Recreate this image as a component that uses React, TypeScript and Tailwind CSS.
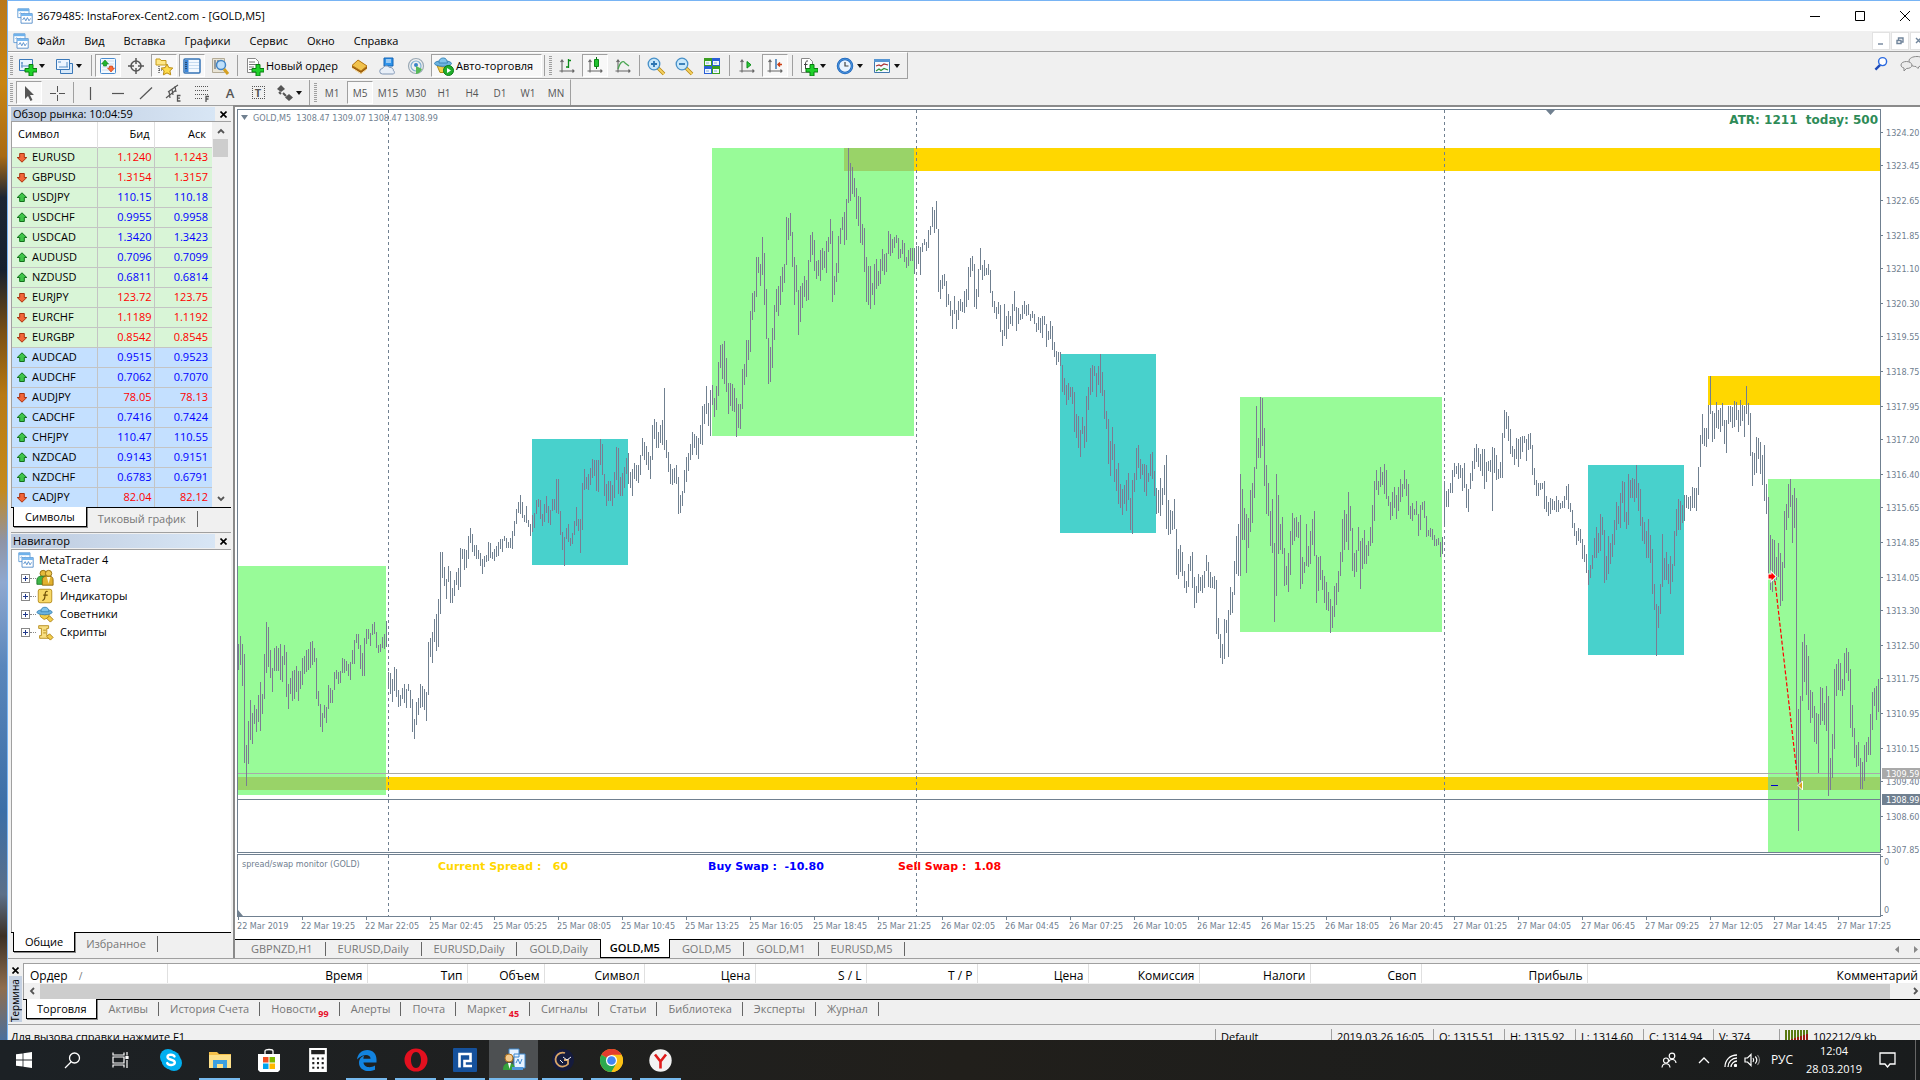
import type { ReactNode } from 'react';
import { clsx } from 'clsx';

// High and low of each M5 bar, two pixels apart on the canvas
const BARS = `
644-670 636-665 644-686 654-763 745-786 721-764 700-740 713-744 705-724 709-732 695-722 682-731 694-714 654-699
622-673 627-667 650-678 668-692 648-671 646-671 648-671 644-680 656-682 645-665 652-697 684-709 678-694 671-701
670-699 666-692 671-701 671-689 658-685 656-674 650-672 649-670 642-668 641-665 648-662 658-699 691-706 704-727
713-732 705-718 707-723 685-709 688-703 690-703 672-690 670-679 672-684 671-683 658-673 659-673 661-671 664-676
662-680 650-664 640-664 634-643 634-649 645-669 653-676 638-676 629-644 629-639 633-646 624-635 622-634 632-648
645-653 644-652 637-648 634-649 621-647 672-688 673-694 679-702 667-691 669-697 690-707 695-706 688-699 684-703
689-708 684-691 690-708 699-732 719-739 702-725 698-715 684-708 686-707 689-710 692-721 642-695 638-657 632-663
619-642 614-651 599-647 552-614 552-578 567-586 579-599 566-582 571-603 588-603 580-596 572-585 568-590 548-587
549-559 549-570 550-568 536-559 528-543 534-552 545-556 545-559 550-559 553-566 559-574 556-567 555-562 542-561
543-558 552-559 549-561 546-557 542-556 539-549 539-552 536-541 538-548 542-548 538-548 531-549 521-536 509-524
502-513 495-514 502-518 515-522 506-523 520-527 524-536 515-532 513-528 500-514 499-507 500-519 514-526 504-522
496-513 506-523 510-525 499-511 499-510 479-513 479-514 511-535 532-550 537-566 528-539 524-542 538-546 533-544
521-535 507-526 519-531 519-553 483-530 469-490 477-489 474-490 468-485 459-478 460-476 460-491 460-492 439-465
444-475 474-496 484-506 481-501 481-501 485-506 472-498 447-480 448-494 477-496 473-496 467-488 458-474 453-484
472-488 469-496 463-479 465-481 465-483 455-475 438-456 442-460 446-465 452-470 456-479 425-460 419-439 422-448
432-448 425-443 420-445 388-450 440-458 452-472 464-484 469-485 468-483 465-484 477-514 495-513 491-506 470-493
457-482 453-471 444-460 432-455 434-448 436-455 438-459 425-444 406-445 404-424 386-414 403-426 390-436 385-405
398-417 386-410 362-396 345-368 344-379 341-384 358-392 383-414 383-406 384-411 388-412 398-437 404-428 404-429
369-409 364-385 340-377 340-360 311-352 293-320 291-312 257-297 257-273 264-286 237-275 253-305 289-339 338-384
347-382 328-368 305-340 289-312 286-316 276-305 267-292 264-283 217-265 218-240 213-236 232-267 257-305 265-292
290-335 286-322 283-308 276-297 280-301 260-300 235-262 232-255 240-271 261-279 260-276 250-281 248-270 251-268
241-273 237-252 219-244 231-302 276-295 263-282 236-273 228-244 217-230 212-245 199-240 148-203 163-201 167-194
178-197 188-219 196-226 197-243 224-245 228-272 257-302 266-305 266-309 283-295 264-305 259-289 271-286 259-284
249-271 254-275 253-272 231-254 234-256 239-253 237-248 235-243 238-259 249-258 240-254 243-262 257-268 250-266
248-261 248-261 248-274 246-268 246-264 247-275 243-252 239-245 242-251 230-248 226-235 207-227 210-233 201-229
229-292 280-299 275-289 274-286 281-307 294-305 301-316 310-329 296-314 310-329 301-320 299-311 302-312 291-313
289-307 267-300 258-277 256-271 264-307 289-309 269-297 248-270 265-280 260-276 268-275 264-275 270-293 291-307
301-313 307-319 302-314 305-332 330-346 304-336 316-339 311-329 316-324 304-326 291-311 307-331 308-324 314-320
305-319 301-314 305-316 304-315 314-321 311-318 314-324 323-332 317-330 318-333 316-338 316-325 324-347 331-340
321-339 326-350 342-357 351-365 352-362 352-366 365-392 378-395 385-405 383-400 387-397 387-404 392-432 414-438
416-448 430-457 417-434 426-448 396-442 387-410 368-395 365-392 366-376 373-397 366-385 354-393 372-396 390-419
411-429 419-464 441-476 427-460 444-482 469-491 463-504 484-508 489-515 485-504 480-511 473-500 498-530 480-534
473-492 448-480 445-468 459-479 464-475 464-492 465-496 473-482 454-476 452-479 471-496 488-514 490-513 478-516
488-505 465-495 455-529 500-535 510-534 511-530 499-529 529-575 549-579 545-572 552-576 571-588 581-593 564-587
556-571 552-588 577-608 586-603 574-593 577-591 575-593 571-588 555-571 562-587 572-588 577-588 576-589 580-634
618-639 634-658 644-664 619-659 620-633 610-657 587-615 592-613 561-595 536-574 524-576 474-576 489-540 508-540
514-573 518-548 490-532 483-523 467-498 406-469 438-458 397-458 398-446 428-486 465-514 483-516 511-546 499-553
543-622 474-596 495-554 524-550 517-554 548-586 566-585 553-592 531-575 513-545 518-541 517-537 522-538 515-589
557-584 562-573 524-566 546-567 531-564 519-545 511-556 555-603 557-591 556-580 570-590 576-603 582-610 592-611
599-633 606-628 586-617 583-605 571-592 552-576 519-562 510-550 514-542 492-550 506-531 528-571 553-577 550-572
527-551 541-589 538-569 530-564 545-564 541-556 527-546 505-543 481-521 470-490 481-495 467-487 472-485 464-494
470-499 496-506 502-520 492-516 487-508 495-519 487-511 479-502 484-497 470-489 479-496 484-515 506-519 503-521
509-515 501-515 514-536 505-530 502-510 501-518 516-537 530-536 528-537 529-540 535-546 539-546 538-545 542-557
537-554 481-526 491-507 489-507 483-493 470-493 463-477 466-474 463-479 465-478 468-491 463-488 484-508 489-512
473-489 461-481 448-469 444-462 448-467 454-471 449-476 449-489 462-482 461-471 460-472 447-511 448-473 455-480
469-479 462-478 433-478 410-438 412-429 416-441 429-454 446-457 449-465 438-459 439-467 437-459 436-452 436-443
439-461 434-450 433-449 445-475 468-485 480-496 483-496 483-490 483-489 481-509 496-512 502-516 498-514 499-510
501-510 496-512 500-512 503-509 501-508 496-508 486-500 484-509 503-512 510-528 523-536 531-545 528-541 529-543
539-559 545-562 554-573 570-585 565-578 555-569 538-558 527-558 533-553 514-551 517-535 530-583 556-580 536-574
543-564 534-557 520-545 502-530 506-524 493-528 481-503 482-522 512-529 474-525 480-498 478-498 479-502 465-498
483-511 489-526 517-541 522-544 531-558 519-558 535-563 549-594 584-610 604-656 606-628 584-614 534-587 558-580
552-580 564-584 556-594 564-582 531-566 509-536 499-530 501-530 505-523 495-521 495-508 497-509 496-511 487-508
488-508 488-511 467-495 435-467 414-444 428-446 428-447 405-439 376-414 411-442 413-439 402-428 410-429 408-432
403-426 420-444 420-453 406-424 406-422 407-428 401-427 402-420 410-432 400-426 405-421 406-437 386-414 403-425
413-456 452-486 453-475 437-473 438-459 442-474 455-485 445-501 484-514 497-574 535-590 539-592 540-582 557-580
543-577 553-606 562-601 511-568 504-530 484-518 479-507 495-543 488-528 498-770 709-831 696-785 642-701 634-682
645-695 656-710 690-723 692-718 706-742 713-744 714-773 687-725 688-721 703-725 686-731 696-796 758-790 734-778
669-749 664-696 659-690 663-691 679-696 653-690 648-673 652-681 669-728 705-737 728-758 745-767 742-766 758-789
762-789 745-781 742-762 737-755 714-755 692-730 688-706 686-720 679-712
`;

const BAR_PATH = BARS.trim()
    .split(/\s+/)
    .map((bar, i) => {
        const [high, low] = bar.split('-');
        return `M${238 + i * 2} ${high}h1V${low}h-1z`;
    })
    .join('');

const LEVELS = [
    { x: 238, y: 777, w: 1642, h: 13 },
    { x: 844, y: 148, w: 1036, h: 23 },
    { x: 1708, y: 376, w: 172, h: 29 },
];

const SESSIONS = [
    { x: 238, y: 566, w: 148, h: 229, fill: '#98fb98' },
    { x: 712, y: 148, w: 202, h: 288, fill: '#98fb98' },
    { x: 1240, y: 397, w: 202, h: 235, fill: '#98fb98' },
    { x: 1768, y: 479, w: 112, h: 373, fill: '#98fb98' },
    { x: 532, y: 439, w: 96, h: 126, fill: '#48d1cc' },
    { x: 1060, y: 354, w: 96, h: 179, fill: '#48d1cc' },
    { x: 1588, y: 465, w: 96, h: 190, fill: '#48d1cc' },
];

const OVERLAPS = [
    { x: 238, y: 777, w: 148, h: 13 },
    { x: 844, y: 148, w: 70, h: 23 },
    { x: 1768, y: 777, w: 112, h: 13 },
];

const PRICES: [string, number][] = [
    ['1324.20', 132], ['1323.45', 165], ['1322.65', 200], ['1321.85', 235], ['1321.10', 268], ['1320.30', 303],
    ['1319.55', 336], ['1318.75', 371], ['1317.95', 406], ['1317.20', 439], ['1316.40', 474], ['1315.65', 507],
    ['1314.85', 542], ['1314.05', 577], ['1313.30', 610], ['1312.50', 645], ['1311.75', 678], ['1310.95', 713],
    ['1310.15', 748], ['1309.40', 781], ['1308.60', 816], ['1307.85', 849],
];

const TIMES = [
    '22 Mar 2019', '22 Mar 19:25', '22 Mar 22:05', '25 Mar 02:45', '25 Mar 05:25', '25 Mar 08:05', '25 Mar 10:45',
    '25 Mar 13:25', '25 Mar 16:05', '25 Mar 18:45', '25 Mar 21:25', '26 Mar 02:05', '26 Mar 04:45', '26 Mar 07:25',
    '26 Mar 10:05', '26 Mar 12:45', '26 Mar 15:25', '26 Mar 18:05', '26 Mar 20:45', '27 Mar 01:25', '27 Mar 04:05',
    '27 Mar 06:45', '27 Mar 09:25', '27 Mar 12:05', '27 Mar 14:45', '27 Mar 17:25',
];

type Quote = { symbol: string; bid: string; ask: string; up: boolean; minor?: boolean };

const QUOTES: Quote[] = [
    { symbol: 'EURUSD', bid: '1.1240', ask: '1.1243', up: false },
    { symbol: 'GBPUSD', bid: '1.3154', ask: '1.3157', up: false },
    { symbol: 'USDJPY', bid: '110.15', ask: '110.18', up: true },
    { symbol: 'USDCHF', bid: '0.9955', ask: '0.9958', up: true },
    { symbol: 'USDCAD', bid: '1.3420', ask: '1.3423', up: true },
    { symbol: 'AUDUSD', bid: '0.7096', ask: '0.7099', up: true },
    { symbol: 'NZDUSD', bid: '0.6811', ask: '0.6814', up: true },
    { symbol: 'EURJPY', bid: '123.72', ask: '123.75', up: false },
    { symbol: 'EURCHF', bid: '1.1189', ask: '1.1192', up: false },
    { symbol: 'EURGBP', bid: '0.8542', ask: '0.8545', up: false },
    { symbol: 'AUDCAD', bid: '0.9515', ask: '0.9523', up: true, minor: true },
    { symbol: 'AUDCHF', bid: '0.7062', ask: '0.7070', up: true, minor: true },
    { symbol: 'AUDJPY', bid: '78.05', ask: '78.13', up: false, minor: true },
    { symbol: 'CADCHF', bid: '0.7416', ask: '0.7424', up: true, minor: true },
    { symbol: 'CHFJPY', bid: '110.47', ask: '110.55', up: true, minor: true },
    { symbol: 'NZDCAD', bid: '0.9143', ask: '0.9151', up: true, minor: true },
    { symbol: 'NZDCHF', bid: '0.6783', ask: '0.6791', up: true, minor: true },
    { symbol: 'CADJPY', bid: '82.04', ask: '82.12', up: false, minor: true },
];

const ORDER_COLUMNS = [
    { label: 'Время', width: 200 },
    { label: 'Тип', width: 100 },
    { label: 'Объем', width: 77 },
    { label: 'Символ', width: 100 },
    { label: 'Цена', width: 111 },
    { label: 'S / L', width: 111 },
    { label: 'T / P', width: 111 },
    { label: 'Цена', width: 111 },
    { label: 'Комиссия', width: 111 },
    { label: 'Налоги', width: 111 },
    { label: 'Своп', width: 111 },
    { label: 'Прибыль', width: 166 },
];

const TERMINAL_TABS = [
    { label: 'Активы' }, { label: 'История Счета' }, { label: 'Новости', count: 99 }, { label: 'Алерты' },
    { label: 'Почта' }, { label: 'Маркет', count: 45 }, { label: 'Сигналы' }, { label: 'Статьи' },
    { label: 'Библиотека' }, { label: 'Эксперты' }, { label: 'Журнал' },
];

const CHART_TABS = ['GBPNZD,H1', 'EURUSD,Daily', 'EURUSD,Daily', 'GOLD,Daily', 'GOLD,M5', 'GOLD,M5', 'GOLD,M1', 'EURUSD,M5'];

/* ---------- icons ---------- */

function Icon({ children, size = 20 }: { children: ReactNode; size?: number }) {
    return (
        <svg width={size} height={size} viewBox="0 0 20 20" fill="none" className="shrink-0" aria-hidden="true">
            {children}
        </svg>
    );
}

const Plus = () => <path d="M12 8.500h4v4h4v3.500h-4V20h-4v-4H8v-3.500h4z" fill="#1fd12a" stroke="#0a7d12" />;

const AppIcon = ({ size = 16 }: { size?: number }) => (
    <Icon size={size}>
        <path d="M1 1h14v11H1z" fill="#fff" stroke="#4c8fd0" />
        <path d="M1 1h14v3H1z" fill="#6fb1ea" />
        <path d="M3 7l2-1 2 3 2-3" stroke="#5c9bd6" />
        <path d="M5 7h14v12H5z" fill="#fff" stroke="#3f7fc4" />
        <path d="M5 7h14v3H5z" fill="#79b8ef" />
        <path d="M7 15l2-3 2 4 2-4 2 4 2-3" stroke="#3f7fc4" />
    </Icon>
);

const NewChartIcon = () => (
    <Icon>
        <path d="M2.500 3.500h13v11h-13z" fill="#eaf4ff" stroke="#3b78b8" />
        <path d="M5 6v6M4 10h9M4 7h2" stroke="#5990c6" />
        <Plus />
    </Icon>
);

const ProfilesIcon = () => (
    <Icon>
        <path d="M6.500 7.500h12v10h-12z" fill="#d7e9fa" stroke="#3b78b8" />
        <path d="M2.500 3.500h13v10h-13z" fill="#eef6ff" stroke="#3b78b8" />
        <path d="M4 6h3M13 6v5M5 11h9" stroke="#5990c6" />
    </Icon>
);

const MarketIcon = () => (
    <Icon>
        <rect x="2.500" y="2.500" width="15" height="15" rx="1" fill="#f4faff" stroke="#4a8bce" />
        <path d="M4 5h12M4 8h12M4 11h12M4 14h12" stroke="#cfdcea" />
        <path d="M7 4l3.500 4H8.500v2h-3V8H3.500z" fill="#22b52c" stroke="#0d7c17" strokeWidth=".6" />
        <path d="M13 16l3.500-4H14.500v-2h-3v2H9.500z" fill="#ff6a33" stroke="#bb3610" strokeWidth=".6" />
    </Icon>
);

const CrossIcon = () => (
    <Icon>
        <circle cx="10" cy="10" r="5" stroke="#555" strokeWidth="1.500" />
        <path d="M10 2v6M10 12v6M2 10h6M12 10h6" stroke="#555" strokeWidth="1.500" />
    </Icon>
);

const star = 'M13 8l1.800 3.600 4 .5-2.900 2.700.8 4L13 16.900l-3.600 1.900.7-4-2.900-2.700 4-.5z';

const NavigatorIcon = () => (
    <Icon>
        <path d="M2 3h4l1 1.500h5V9H2z" fill="#ffe887" stroke="#c49a1c" />
        <path d="M5 10v8M5 14h4" stroke="#222" strokeDasharray="1 1" />
        <path d={star} fill="#ffdd4d" stroke="#b98a10" />
    </Icon>
);

const TerminalIcon = () => (
    <Icon>
        <rect x="2" y="3" width="16" height="14" rx="1" fill="#f3f9ff" stroke="#3573b5" strokeWidth="1.500" />
        <path d="M3 4h3.500v12H3z" fill="#3c86d8" />
        <path d="M7 6.500h10M7 9.500h10M7 12.500h10" stroke="#c7dcf0" />
        <path d="M4 6v8" stroke="#111" strokeDasharray="1 1" />
    </Icon>
);

const TesterIcon = () => (
    <Icon>
        <path d="M2.500 2.500h12v14h-12z" fill="#e9e4d5" stroke="#b3ab96" />
        <path d="M5 4v9M8 4v5" stroke="#456" />
        <circle cx="11" cy="9" r="4.500" fill="#bfe0fa" stroke="#4285c6" strokeWidth="1.500" />
        <path d="M14 13l4 5" stroke="#d5a021" strokeWidth="3" />
    </Icon>
);

const NewOrderIcon = () => (
    <Icon>
        <path d="M3.500 2.500h8l3 3v11h-11z" fill="#fff" stroke="#888" />
        <path d="M5 6h6M5 8.500h7M5 11h5M5 13.500h4" stroke="#777" />
        <Plus />
    </Icon>
);

const BookIcon = () => (
    <Icon>
        <path d="M8 4l9 6v3l-6 5-9-6V9.500z" fill="#9b5c0c" />
        <path d="M8 4l9 6-6 5-9-5.500z" fill="#f1c24c" stroke="#b77a17" />
        <path d="M2 12l9 5.500 6-4.500" stroke="#ffe9b0" />
    </Icon>
);

const VpsIcon = () => (
    <Icon>
        <path d="M6 2h9v8H6z" fill="#2f93ea" stroke="#1565b5" />
        <path d="M8 4h5M8 6h5" stroke="#fff" />
        <path d="M4.500 18a2.700 2.700 0 010-5.500 4 4 0 017-1 3.300 3.300 0 014 3.300 1.900 1.900 0 010 3.200z" fill="#e8eff8" stroke="#8096b4" />
    </Icon>
);

const SignalIcon = () => (
    <Icon>
        <circle cx="10" cy="10" r="7.500" stroke="#9aa9b5" strokeWidth="1.200" />
        <circle cx="10" cy="10" r="5" stroke="#7fb0d2" strokeWidth="1.200" />
        <circle cx="10" cy="9" r="2" fill="#3a83c9" />
        <path d="M10 10v8a8 8 0 006-5z" fill="#57b957" />
    </Icon>
);

const AdvisorIcon = () => (
    <Icon>
        <path d="M3 9.500l6 1.500 6-1.500-2 7H6z" fill="#f2cd49" stroke="#b58c17" />
        <ellipse cx="9" cy="7.500" rx="8.500" ry="2.800" fill="#6db4e0" stroke="#3b86b8" />
        <path d="M5 7C5 3 7 2 9.500 2S13 4 13.500 7z" fill="#81c4ec" stroke="#3b86b8" />
        <circle cx="14.500" cy="14.500" r="5" fill="#1fae2c" stroke="#0d7c17" />
        <path d="M13 12l4 2.500-4 2.500z" fill="#fff" />
    </Icon>
);

const Axes = () => <path d="M5 4v12.500M3.500 6L5 4l1.500 2M2.500 15H17M15.500 13.500L17 15l-1.500 1.500" stroke="#666" strokeWidth="1.100" />;

const BarChartIcon = () => (
    <Icon><Axes /><path d="M11.500 3v9M11.500 4.500h2.500M9 11h2.500" stroke="#0b8a18" strokeWidth="1.300" /></Icon>
);
const CandleIcon = () => (
    <Icon><Axes /><path d="M11.500 1v12" stroke="#0b6a14" /><path d="M9.500 3.500h4v7h-4z" fill="#22c12f" stroke="#0b8a18" /></Icon>
);
const LineChartIcon = () => (
    <Icon><Axes /><path d="M5 13c2-7 5-9 7-6l4 3" stroke="#4aa552" strokeWidth="1.300" /></Icon>
);
const ScrollIcon = () => (
    <Icon><Axes /><path d="M10 5.500l4 3.300-4 3.300z" fill="#2ccb38" stroke="#0b8a18" /></Icon>
);
const ShiftIcon = () => (
    <Icon><Axes /><path d="M11 3v10" stroke="#1f63a8" strokeWidth="1.300" /><path d="M17 8.500h-4M15 6.500l-2 2 2 2" stroke="#cc3e12" strokeWidth="1.500" /></Icon>
);

const ZoomIcon = ({ plus }: { plus?: boolean }) => (
    <Icon>
        <path d="M12 12l6 6" stroke="#b98913" strokeWidth="3.500" />
        <path d="M12 12l6 6" stroke="#f6d262" strokeWidth="1.800" />
        <circle cx="8" cy="8" r="5.800" fill="#c9e8fb" stroke="#4790c8" strokeWidth="1.300" />
        <path d={plus ? 'M5 8h6M8 5v6' : 'M5 8h6'} stroke="#2d76b3" strokeWidth="1.800" />
    </Icon>
);

const TileIcon = () => (
    <Icon>
        <path d="M2 2h8v8H2zM10 10h8v8h-8z" fill="#3b9e22" />
        <path d="M10 2h8v8h-8zM2 10h8v8H2z" fill="#2a5fd6" />
        <path d="M3 5h6v4H3zM11 5h6v4h-6zM3 13h6v4H3zM11 13h6v4h-6z" fill="#f2f8ff" />
        <path d="M4 7h3M12 7h3M4 15h3M12 15h3" stroke="#8aaed6" />
    </Icon>
);

const IndicatorAddIcon = () => (
    <Icon>
        <path d="M3.500 2.500h8l3 3v11h-11z" fill="#fff" stroke="#888" />
        <path d="M10 5c-2-.5-2.500 1-2.500 3v5M6 8.500h3.500" stroke="#444" />
        <Plus />
    </Icon>
);

const ClockIcon = () => (
    <Icon>
        <circle cx="10" cy="10" r="7" fill="#e9f4ff" stroke="#1b62b8" strokeWidth="2.500" />
        <circle cx="10" cy="10" r="7" stroke="#59a6ec" strokeWidth=".8" />
        <path d="M10 6V10h3.500" stroke="#444" strokeWidth="1.200" />
    </Icon>
);

const TemplateIcon = () => (
    <Icon>
        <path d="M2.500 3.500h15v13h-15z" fill="#f6fbff" stroke="#4077ae" />
        <path d="M2 3h16v3H2z" fill="#5796d3" />
        <path d="M4 10l3-1 2 1 3-2 4 1" stroke="#a33" strokeWidth="1.200" />
        <path d="M4 15l3-2 2 1.500 3-2 4 1.500" stroke="#2d9434" strokeWidth="1.200" />
    </Icon>
);

const ArrowMark = ({ up }: { up: boolean }) => (
    <svg width="12" height="11" viewBox="0 0 12 11" className="shrink-0" aria-hidden="true">
        {up
            ? <path d="M6 .8l4.800 4.700H8.300v4H3.700v-4H1.200z" fill="#3fc54a" stroke="#10701b" />
            : <path d="M6 10.200L1.200 5.500h2.500v-4h4.600v4h2.500z" fill="#f2663a" stroke="#a8320f" />}
    </svg>
);

/* ---------- toolbar parts ---------- */

const dots = 'bg-[#f8f8f8] border border-t-[#a0a0a0] border-l-[#a0a0a0] border-r-white border-b-white';

function Tool({ children, label, pressed }: { children: ReactNode; label: string; pressed?: boolean }) {
    return (
        <div className="flex w-7 justify-center">
            <button aria-label={label} className={clsx('flex h-[23px] w-[26px] items-center justify-center', pressed && dots)}>
                {children}
            </button>
        </div>
    );
}

function DropTool({ children, label }: { children: ReactNode; label: string }) {
    return (
        <button aria-label={label} className="flex w-[37px] items-center">
            <span className="flex w-6 justify-center">{children}</span>
            <svg width="7" height="4" aria-hidden="true"><path d="M0 0h6L3 4z" fill="#111" /></svg>
        </button>
    );
}

const Grip = ({ wide }: { wide?: boolean }) => (
    <div className={clsx('flex h-5 items-center pl-[2px]', wide ? 'w-[7px]' : 'w-[6px]')}>
        <div className="h-full w-[3px] bg-[repeating-linear-gradient(#a0a0a0_0_1px,#f0f0f0_1px_2px)]" />
    </div>
);

const Sep = ({ wide }: { wide?: boolean }) => (
    <div className={clsx('flex h-[21px] justify-center', wide ? 'w-[7px]' : 'w-[5px]')}>
        <div className="w-px bg-[#a0a0a0]" />
    </div>
);

function Toolbars() {
    return (
        <div className="relative border-t border-[#a0a0a0] bg-[#f0f0f0]">
            <div className="flex h-[27px] w-max items-center border-t border-r border-b border-t-white border-r-[#a0a0a0] border-b-[#a0a0a0]">
                <Grip wide />
                <DropTool label="Новый график"><NewChartIcon /></DropTool>
                <DropTool label="Профили"><ProfilesIcon /></DropTool>
                <Sep />
                <Tool label="Обзор рынка" pressed><MarketIcon /></Tool>
                <Tool label="Окно данных"><CrossIcon /></Tool>
                <Tool label="Навигатор" pressed><NavigatorIcon /></Tool>
                <Tool label="Терминал" pressed><TerminalIcon /></Tool>
                <Tool label="Тестер стратегий"><TesterIcon /></Tool>
                <Sep wide />
                <button className="flex w-[105px] items-center gap-[2px] pl-[3px]">
                    <NewOrderIcon />
                    <span className="text-[11px] leading-4 whitespace-nowrap">Новый ордер</span>
                </button>
                <Tool label="MetaEditor"><BookIcon /></Tool>
                <Tool label="VPS"><VpsIcon /></Tool>
                <Tool label="Сигналы"><SignalIcon /></Tool>
                <button className={clsx('ml-px flex h-[23px] w-[111px] items-center gap-[2px] pl-[2px]', dots)}>
                    <AdvisorIcon />
                    <span className="text-[11px] leading-4 whitespace-nowrap">Авто-торговля</span>
                </button>
                <Sep />
                <Grip />
                <Tool label="Бары"><BarChartIcon /></Tool>
                <Tool label="Японские свечи" pressed><CandleIcon /></Tool>
                <Tool label="Линия"><LineChartIcon /></Tool>
                <Sep />
                <Tool label="Увеличить"><ZoomIcon plus /></Tool>
                <Tool label="Уменьшить"><ZoomIcon /></Tool>
                <Tool label="Окна мозаикой"><TileIcon /></Tool>
                <Sep wide />
                <Tool label="Автопрокрутка"><ScrollIcon /></Tool>
                <Tool label="Сдвиг графика" pressed><ShiftIcon /></Tool>
                <Sep wide />
                <DropTool label="Индикаторы"><IndicatorAddIcon /></DropTool>
                <DropTool label="Периоды"><ClockIcon /></DropTool>
                <DropTool label="Шаблоны"><TemplateIcon /></DropTool>
            </div>
            <div className="flex h-[26px] w-max items-center border-t border-r border-t-white border-r-[#a0a0a0] text-[#555]">
                <Grip wide />
                <Tool label="Курсор" pressed>
                    <Icon><path d="M6 3v13l3-3 2.500 5 2-1-2.500-5h4z" fill="#555" /></Icon>
                </Tool>
                <Tool label="Перекрестие">
                    <Icon><path d="M10.500 3v6M10.500 12v6M3 10.500h6M12 10.500h6" stroke="#555" /></Icon>
                </Tool>
                <Sep />
                <Tool label="Вертикальная линия"><Icon><path d="M10.500 4v13" stroke="#555" strokeWidth="1.200" /></Icon></Tool>
                <Tool label="Горизонтальная линия"><Icon><path d="M4 10.500h12" stroke="#555" strokeWidth="1.200" /></Icon></Tool>
                <Tool label="Трендовая линия"><Icon><path d="M4 16L16 4.500" stroke="#555" strokeWidth="1.200" /></Icon></Tool>
                <Tool label="Канал">
                    <Icon>
                        <path d="M2 15L12 7M4 9l10-7M5 8l1 7M8 6l1 6M11 3l1 6" stroke="#555" strokeWidth="1.200" />
                        <path d="M16.500 12.500h-3v5.500h3M13.500 15.200h2.500" stroke="#555" strokeWidth="1.300" />
                    </Icon>
                </Tool>
                <Tool label="Фибоначчи">
                    <Icon>
                        <path d="M3 3.500h14M3 7.500h14M3 11.500h14M3 15.500h8" stroke="#555" strokeDasharray="1 1" />
                        <path d="M17 13.500h-3V19M14 16h2.500" stroke="#555" strokeWidth="1.300" />
                    </Icon>
                </Tool>
                <Tool label="Текст"><span className="text-[13px] leading-4 font-semibold">A</span></Tool>
                <Tool label="Метка">
                    <span className="flex size-[13px] items-center justify-center border border-dotted border-[#555] text-[11px] leading-3 font-bold">T</span>
                </Tool>
                <DropTool label="Стрелки">
                    <Icon>
                        <path d="M7 2l4 4-4 3-4-3zM15 11l4 3.500-4 3.500-4-3.500z" fill="#555" />
                        <path d="M5 9l2 2M9 10l3 3" stroke="#555" strokeWidth="2" />
                    </Icon>
                </DropTool>
                <div className="h-full w-px bg-[#a0a0a0]" />
                <div className="pl-[2px]"><Grip /></div>
                {['M1', 'M5', 'M15', 'M30', 'H1', 'H4', 'D1', 'W1', 'MN'].map(period => (
                    <Tool key={period} label={period} pressed={period === 'M5'}>
                        <span className="text-[10px] leading-4">{period}</span>
                    </Tool>
                ))}
            </div>
            <div className="absolute top-[3px] right-0 flex items-center gap-[11px] overflow-hidden">
                <button aria-label="Поиск">
                    <Icon size={16}>
                        <path d="M3 17l6-6" stroke="#1d49b8" strokeWidth="3" />
                        <circle cx="12" cy="7" r="5" fill="#fff" stroke="#2b6ae0" strokeWidth="1.800" />
                    </Icon>
                </button>
                <button aria-label="Чат" className="-mr-1">
                    <svg width="24" height="18" viewBox="0 0 24 18" fill="#ececec" stroke="#8a8a8a" aria-hidden="true">
                        <path d="M9 6c0-3 4-4.500 8-4.500s7 2 7 5-3 5-5 5l-1 2-2-2c-4 0-7-2-7-5.500z" />
                        <path d="M1 10c0-2.500 3-3.500 5.500-3.500S12 8 12 10s-2 3.500-5.500 3.500L4 16v-3c-2-.5-3-1.500-3-3z" />
                    </svg>
                </button>
            </div>
        </div>
    );
}

function PanelTitle({ children }: { children: ReactNode }) {
    return (
        <div className="flex h-[14px] items-center">
            <h2 className="h-full flex-1 bg-linear-to-r from-[#bccade] to-[#d8e6f5] pl-[2px] text-[11px] leading-[14px] whitespace-nowrap">{children}</h2>
            <button aria-label="Закрыть" className="flex w-4 justify-center">
                <svg width="7" height="7" aria-hidden="true"><path d="M.5.500l6 6M6.500.500l-6 6" stroke="#000" strokeWidth="1.600" /></svg>
            </button>
        </div>
    );
}

function MarketWatch() {
    return (
        <section className="flex flex-col pt-px">
            <PanelTitle>Обзор рынка: 10:04:59</PanelTitle>
            <div className="flex border-t border-l border-[#a0a0a0] bg-[#f0f0f0] pr-[2px]">
                <table className="flex-1 table-fixed border-collapse bg-white text-[11px] leading-4">
                    <thead>
                        <tr className="h-[25px]">
                            <th className="w-[85px] border-r border-[#e0e0e0] pl-[6px] text-left font-normal">Символ</th>
                            <th className="w-[57px] border-r border-[#e0e0e0] pr-1 text-right font-normal">Бид</th>
                            <th className="pr-[6px] text-right font-normal">Аск</th>
                        </tr>
                    </thead>
                    <tbody>
                        {QUOTES.map(q => (
                            <tr key={q.symbol} className={clsx('h-5 border-t border-[#c4c4c4]', q.minor ? 'bg-[#c4e0ff]' : 'bg-[#d9f5d7]')}>
                                <td className="border-r border-[#c4c4c4] pl-1">
                                    <span className="flex items-center gap-1"><ArrowMark up={q.up} />{q.symbol}</span>
                                </td>
                                <td className={clsx('border-r border-[#c4c4c4] pr-[2px] text-right', q.up ? 'text-[#0000ff]' : 'text-[#ff0000]')}>{q.bid}</td>
                                <td className={clsx('pr-1 text-right', q.up ? 'text-[#0000ff]' : 'text-[#ff0000]')}>{q.ask}</td>
                            </tr>
                        ))}
                    </tbody>
                </table>
                <div className="flex w-[17px] flex-col items-center">
                    <button aria-label="Вверх" className="flex h-[17px] items-center">
                        <svg width="8" height="6" fill="none" aria-hidden="true"><path d="M1 5l3-3 3 3" stroke="#555" strokeWidth="1.800" /></svg>
                    </button>
                    <div className="h-[18px] w-[15px] bg-[#cdcdcd]" />
                    <button aria-label="Вниз" className="mt-auto flex h-[17px] items-center">
                        <svg width="8" height="6" fill="none" aria-hidden="true"><path d="M1 1l3 3 3-3" stroke="#555" strokeWidth="1.800" /></svg>
                    </button>
                </div>
            </div>
            <PanelTabs active="Символы" other="Тиковый график" />
        </section>
    );
}

function PanelTabs({ active, other }: { active: string; other: string }) {
    return (
        <div className="flex h-[23px] border-t border-black pl-[2px] text-[11px] leading-4">
            <button className="-mt-px h-[20px] border border-t-0 border-black bg-white px-[11px] shadow-[1px_1px_0_#888]">{active}</button>
            <button className="my-[3px] border-r border-[#666] px-[11px] text-[#777] leading-3">{other}</button>
        </div>
    );
}

const Tip = () => <path d="M15 12l4 4-3 3-4-4z" fill="#f3cd4a" stroke="#a87c10" />;

function Navigator() {
    const nodes = [
        {
            label: 'Счета',
            icon: (
                <Icon size={18}>
                    <circle cx="8" cy="5" r="3.500" fill="#e6b93a" stroke="#8f6a0d" />
                    <circle cx="14" cy="5" r="3.500" fill="#f1cb52" stroke="#8f6a0d" />
                    <path d="M1 17v-5c0-3 3-4 5-4h4v9z" fill="#3fb54a" stroke="#1e7a28" />
                    <path d="M7 18v-6c0-3 2-4 5-4h3c3 0 4 2 4 4v6z" fill="#e2b12f" stroke="#8f6a0d" />
                    <path d="M12 9l2 7 2-7" fill="#fff6d0" />
                </Icon>
            ),
        },
        {
            label: 'Индикаторы',
            icon: (
                <Icon size={18}>
                    <rect x="2.500" y="2.500" width="15" height="15" rx="2" fill="#f8d967" stroke="#b48a18" />
                    <path d="M13 5c-2-1-3 1-3 4s-.5 6-3 6M8 9h5" stroke="#6b4d05" strokeWidth="1.300" />
                </Icon>
            ),
        },
        {
            label: 'Советники',
            icon: (
                <Icon size={18}>
                    <path d="M4 9l6 2 5-2-1 5-5 2-4-3z" fill="#f2cd49" stroke="#b58c17" />
                    <ellipse cx="9.500" cy="8" rx="8.500" ry="2.800" fill="#6db4e0" stroke="#3b86b8" />
                    <path d="M5.500 7.500C5.500 4 7 2.500 10 2.500s4 2 4.500 5z" fill="#81c4ec" stroke="#3b86b8" />
                    <Tip />
                </Icon>
            ),
        },
        {
            label: 'Скрипты',
            icon: (
                <Icon size={18}>
                    <path d="M3 3h11v3h-2v8h3v3H4v-3h2V6H3z" fill="#f8df83" stroke="#b48a18" />
                    <path d="M8 8h3M8 11h3" stroke="#b48a18" />
                    <Tip />
                </Icon>
            ),
        },
    ];
    return (
        <section className="flex min-h-0 flex-1 flex-col border-t border-[#a0a0a0] pt-px">
            <PanelTitle>Навигатор</PanelTitle>
            <div className="mt-px flex-1 border-t border-l border-[#a0a0a0] bg-white pt-px text-[11px] leading-[18px]">
                <div className="flex items-center gap-[5px] pl-[6px]"><AppIcon />MetaTrader 4</div>
                <ul>
                    {nodes.map(node => (
                        <li key={node.label} className="flex h-[18px] items-center pl-[9px]">
                            <button aria-label="Развернуть" className="flex size-[9px] items-center justify-center border border-[#888] bg-white">
                                <svg width="5" height="5" aria-hidden="true"><path d="M0 2.500h5M2.500 0v5" stroke="#223a8c" /></svg>
                            </button>
                            <span className="w-[6px] border-t border-dotted border-[#888]" />
                            {node.icon}
                            <span className="pl-[6px]">{node.label}</span>
                        </li>
                    ))}
                </ul>
            </div>
            <PanelTabs active="Общие" other="Избранное" />
        </section>
    );
}

function Chart() {
    return (
        <svg className="block min-h-0 w-full flex-1 bg-white font-['DejaVu_Sans_Condensed','DejaVu_Sans',sans-serif]" role="img" aria-label="GOLD,M5">
            <defs>
                <clipPath id="sessions">
                    {SESSIONS.map((z, i) => <rect key={i} x={z.x} y={z.y} width={z.w} height={z.h} />)}
                </clipPath>
            </defs>
            <g transform="translate(-235 -107)">
                <g shapeRendering="crispEdges">
                    {LEVELS.map((z, i) => <rect key={i} x={z.x} y={z.y} width={z.w} height={z.h} fill="#ffd700" />)}
                    {SESSIONS.map((z, i) => <rect key={i} x={z.x} y={z.y} width={z.w} height={z.h} fill={z.fill} />)}
                    {OVERLAPS.map((z, i) => <rect key={i} x={z.x} y={z.y} width={z.w} height={z.h} fill="#99d368" />)}
                    <path d="M238 773h1643v1H238z" fill="#a9a9a9" />
                    <path d="M238 799h1643v1H238z" fill="#708090" />
                    <path d="M388.500 110v742M388.500 855v61M916.500 110v742M916.500 855v61M1444.500 110v742M1444.500 855v61" stroke="#708090" strokeDasharray="3 3" />
                    <path d={BAR_PATH} fill="#708090" />
                    <path d={BAR_PATH} fill="#7b7c92" clipPath="url(#sessions)" />
                    <path d="M237.500 852.500v-743h1643v743zM237.500 916.500v-62h1643v62z" fill="none" stroke="#708090" />
                    {PRICES.map(([price, y]) => <path key={price} d={`M1881 ${y}h2v1h-2z`} fill="#708090" />)}
                    {TIMES.map((t, i) => <path key={t} d={`M${238 + i * 64} 917h1v3h-1z`} fill="#708090" />)}
                    <path d="M1881 856h2v1h-2zM1881 915h2v1h-2z" fill="#708090" />
                </g>
                <path d="M241 115h7l-3.500 5zM1546 110h9l-4.500 5zM238 910l5 6h-5z" fill="#708090" />
                <path d="M1775 581L1798 783" stroke="#ff0000" strokeWidth="1.200" strokeDasharray="4 2" />
                <path d="M1768.500 574.500h3v-2l4 4-4 4v-2h-3z" fill="#ff0000" stroke="#fff" strokeWidth="2" paintOrder="stroke" />
                <path d="M1798 785.500l4.500-4.500v9z" fill="#daa520" stroke="#fff" />
                <path d="M1771 785h7v1h-7z" fill="#0000cd" />
                <g fontSize="9" fill="#708090">
                    <text x="253" y="121">{'GOLD,M5\u00a0 1308.47 1309.07 1308.47 1308.99'}</text>
                    <text x="242" y="867">spread/swap monitor (GOLD)</text>
                    {PRICES.map(([price, y]) => <text key={price} x="1886" y={y + 4}>{price}</text>)}
                    <text x="1884" y="865">0</text>
                    <text x="1884" y="913">0</text>
                    {TIMES.map((t, i) => <text key={t} x={237 + i * 64} y="929">{t}</text>)}
                </g>
                <path d="M1882 768h38v11h-38z" fill="#a9a9a9" />
                <path d="M1882 794h38v11h-38z" fill="#708090" />
                <g fontSize="9" fill="#fff">
                    <text x="1886" y="777">1309.59</text>
                    <text x="1886" y="803">1308.99</text>
                </g>
                <g fontFamily="'DejaVu Sans', sans-serif" fontWeight="700">
                    <text x="1878" y="124" fontSize="12" fill="#2e8b57" textAnchor="end">{'ATR: 1211\u00a0 today: 500'}</text>
                    <g fontSize="11">
                        <text x="438" y="870" fill="#ffd700">{'Current Spread :\u00a0\u00a0 60'}</text>
                        <text x="708" y="870" fill="#0000ff">{'Buy Swap :\u00a0 -10.80'}</text>
                        <text x="898" y="870" fill="#ff0000">{'Sell Swap :\u00a0 1.08'}</text>
                    </g>
                </g>
            </g>
        </svg>
    );
}

function ChartTabs() {
    return (
        <div className="flex h-[19px] border-t border-black bg-[#f0f0f0] pl-1 text-[11px] leading-4 text-[#777]">
            {CHART_TABS.map((tab, i) => (
                <button
                    key={i}
                    className={clsx(
                        'whitespace-nowrap',
                        i === 4
                            ? '-mt-px h-[19px] border border-t-0 border-black bg-white px-[9px] font-semibold text-black'
                            : 'my-[2px] px-3 leading-3',
                        i !== 4 && i !== 3 && 'border-r border-[#666]',
                    )}
                >
                    {tab}
                </button>
            ))}
            <div className="ml-auto flex items-center gap-[15px] pr-[2px]">
                <button aria-label="Назад"><svg width="4" height="7" aria-hidden="true"><path d="M4 0v7L0 3.500z" fill="#888" /></svg></button>
                <button aria-label="Вперёд"><svg width="4" height="7" aria-hidden="true"><path d="M0 0v7l4-3.500z" fill="#888" /></svg></button>
            </div>
        </div>
    );
}

function Terminal() {
    return (
        <section className="flex border-t border-[#a0a0a0] pt-1">
            <div className="flex w-[15px] flex-col items-center pt-px">
                <button aria-label="Закрыть" className="flex h-3 items-center">
                    <svg width="7" height="7" aria-hidden="true"><path d="M.5.500l6 6M6.500.500l-6 6" stroke="#000" strokeWidth="1.600" /></svg>
                </button>
                <h2 className="h-[46px] w-[13px] rotate-180 bg-[#c5d1e2] text-[10px] leading-[13px] [writing-mode:vertical-rl]">Термина</h2>
            </div>
            <div className="min-w-0 flex-1">
                <div className="border-t border-l border-[#a0a0a0] bg-white">
                    <table className="w-full table-fixed border-collapse text-[12px] leading-[14px]">
                        <thead>
                            <tr className="h-[19px]">
                                <th className="w-[143px] border-r border-[#e0e0e0] pt-[5px] pl-[6px] text-left font-normal">
                                    Ордер <span className="pl-2 text-[10px] text-[#777]">/</span>
                                </th>
                                {ORDER_COLUMNS.map((col, i) => (
                                    <th key={i} style={{ width: col.width }} className="border-r border-[#e0e0e0] pt-[5px] pr-1 text-right font-normal whitespace-nowrap">{col.label}</th>
                                ))}
                                <th className="pt-[5px] pr-[2px] text-right font-normal">Комментарий</th>
                            </tr>
                        </thead>
                    </table>
                    <div className="flex h-4 items-center bg-[#f0f0f0]">
                        <button aria-label="Влево" className="flex w-4 justify-center">
                            <svg width="6" height="8" fill="none" aria-hidden="true"><path d="M5 1L2 4l3 3" stroke="#555" strokeWidth="1.800" /></svg>
                        </button>
                        <div className="h-[15px] flex-1 bg-[#cdcdcd]" />
                        <button aria-label="Вправо" className="flex w-[30px] justify-end pr-px">
                            <svg width="6" height="8" fill="none" aria-hidden="true"><path d="M1 1l3 3-3 3" stroke="#555" strokeWidth="1.800" /></svg>
                        </button>
                    </div>
                </div>
                <div className="flex h-[25px] border-t border-black pl-[3px] text-[11px] leading-4 text-[#777]">
                    <button className="-mt-px h-5 border border-t-0 border-black bg-white px-[10px] text-black shadow-[1px_1px_0_#888]">Торговля</button>
                    {TERMINAL_TABS.map(tab => (
                        <button key={tab.label} className="mt-[2px] flex h-[14px] items-center border-r border-[#666] pr-[10px] pl-[11px] whitespace-nowrap">
                            {tab.label}
                            {tab.count && <sub className="top-[5px] pl-[2px] text-[9px] leading-3 font-bold text-[#e8112d]">{tab.count}</sub>}
                        </button>
                    ))}
                </div>
            </div>
        </section>
    );
}

function StatusBar() {
    const cells = [
        { text: 'Default', width: 116 },
        { text: '2019.03.26 16:05', width: 102 },
        { text: 'O: 1315.51', width: 71 },
        { text: 'H: 1315.92', width: 71 },
        { text: 'L: 1314.60', width: 68 },
        { text: 'C: 1314.94', width: 70 },
        { text: 'V: 374', width: 66 },
    ];
    return (
        <footer className="flex h-4 shrink-0 items-start overflow-hidden border-t border-[#a0a0a0] pt-[4px] text-[11px] leading-4">
            <span className="flex-1 pl-[3px]">Для вызова справки нажмите F1</span>
            {cells.map(cell => (
                <span key={cell.text} style={{ width: cell.width }} className="border-l border-[#a0a0a0] pl-[5px] whitespace-nowrap">{cell.text}</span>
            ))}
            <span className="flex w-[141px] gap-1 border-l border-[#a0a0a0] pl-[5px] whitespace-nowrap">
                <svg width="24" height="12" aria-hidden="true">
                    {[0, 3, 6, 9, 12, 15, 18, 21].map((x, i) => (
                        <g key={x}>
                            <rect x={x} y="1" width="2" height="11" fill="#5b7a12" />
                            {i > 1 && <rect x={x} y={12 - i} width="2" height={i} fill="#9c1a12" />}
                        </g>
                    ))}
                </svg>
                102212/9 kb
            </span>
        </footer>
    );
}

/* ---------- taskbar ---------- */

function Task({ label, children, open, active }: { label: string; children: ReactNode; open?: boolean; active?: boolean }) {
    return (
        <button aria-label={label} className={clsx('relative flex h-full w-[49px] items-center justify-center', active && 'bg-[#4d5052]')}>
            {children}
            {open && <span className={clsx('absolute bottom-0 h-[2px] bg-[#76b9ed]', active ? 'inset-x-0' : 'inset-x-1')} />}
        </button>
    );
}

function Taskbar() {
    return (
        <nav className="flex h-10 shrink-0 items-center bg-linear-to-r from-[#1c2125] via-[#211f1b] to-[#191c1d] text-white">
            <button aria-label="Пуск" className="flex h-full w-12 items-center justify-center">
                <svg width="16" height="16" viewBox="0 0 16 16" fill="#fff"><path d="M0 2.300L6.600 1.400v6.200H0zM7.400 1.300L16 0v7.600H7.400zM0 8.400h6.600v6.200L0 13.700zM7.400 8.400H16V16l-8.600-1.300z" /></svg>
            </button>
            <button aria-label="Поиск" className="flex h-full w-12 items-center justify-center">
                <svg width="17" height="17" viewBox="0 0 17 17" fill="none" stroke="#fff" strokeWidth="1.300"><circle cx="10.500" cy="6" r="5" /><path d="M7 10l-6 6" /></svg>
            </button>
            <button aria-label="Представление задач" className="mr-[2px] flex h-full w-12 items-center justify-center">
                <svg width="17" height="16" viewBox="0 0 17 16" fill="none" stroke="#fff" strokeWidth="1.200"><path d="M1 .5V3h11V.5M1 15.500V13h11v2.500M1 5h11v6H1zM15 0v3.500M15 8v8" /><path d="M14 4.500h2v2h-2z" fill="#fff" /></svg>
            </button>
            <Task label="Skype">
                <svg width="22" height="22" viewBox="0 0 22 22"><circle cx="8" cy="8" r="8" fill="#00aff0" /><circle cx="14" cy="14" r="8" fill="#00aff0" /><circle cx="11" cy="11" r="9.500" fill="#00aff0" /><path d="M14.500 7.500C13.500 5 7.500 5 7.500 8c0 3.500 7.300 2 7.300 5.500 0 3-6.300 3.500-7.600.500" fill="none" stroke="#fff" strokeWidth="2.400" strokeLinecap="round" /></svg>
            </Task>
            <Task label="Проводник" open>
                <svg width="22" height="18" viewBox="0 0 22 18"><path d="M0 1h8l2 2h12v14H0z" fill="#f5c04a" /><path d="M0 4h22v13H0z" fill="#fde08a" /><path d="M4 17V9h14v8h-4v-4H8v4z" fill="#3d9fe0" /></svg>
            </Task>
            <Task label="Microsoft Store">
                <svg width="22" height="24" viewBox="0 0 22 24"><path d="M7 7V3c0-2 8-2 8 0v4" fill="none" stroke="#fff" strokeWidth="1.300" /><path d="M0 6h22v16l-2 2H2l-2-2z" fill="#fff" /><path d="M5 9h5.500v5.500H5z" fill="#f25022" /><path d="M11.500 9H17v5.500h-5.500z" fill="#7fba00" /><path d="M5 15.500h5.500V21H5z" fill="#00a4ef" /><path d="M11.500 15.500H17V21h-5.500z" fill="#ffb900" /></svg>
            </Task>
            <Task label="Калькулятор">
                <svg width="18" height="24" viewBox="0 0 17 23"><path d="M0 0h17v23H0z" fill="#fff" /><path d="M2 2h13v4H2zM3 9h2v2H3zM7.500 9h2v2h-2zM12 9h2v2h-2zM3 13.500h2v2H3zM7.500 13.500h2v2h-2zM12 13.500h2v2h-2zM3 18h2v2H3zM7.500 18h2v2h-2zM12 18h2v2h-2z" fill="#222" /></svg>
            </Task>
            <Task label="Edge" open>
                <svg width="20" height="21" viewBox="0 0 20 21" fill="#1283e0"><path d="M0 9.500C.7 4 4.500 0 10.300 0 16 0 19.500 4 19.500 9.500v3H6.500c.3 5 7 6 11.500 3v4.200C11 23 2 20.500 2 12.800 2 9 4.500 6.500 7.500 5.500 6.500 6.500 6.500 7.500 6.400 8.800h7.100c.3-4.800-7.500-5.800-13.500.7z" /></svg>
            </Task>
            <Task label="Opera" open>
                <svg width="24" height="24" viewBox="0 0 24 24"><path fillRule="evenodd" d="M12 .5a11.500 11.500 0 100 23 11.500 11.500 0 000-23zM12 4c-3 0-5 3.500-5 8s2 8 5 8 5-3.500 5-8-2-8-5-8z" fill="#e3101f" /></svg>
            </Task>
            <Task label="РБ" open>
                <svg width="24" height="24" viewBox="0 0 24 24"><rect width="24" height="24" rx="1" fill="#15519c" /><path d="M6.500 19.500V6h11v7h-6v5H19" fill="none" stroke="#fff" strokeWidth="2.600" /></svg>
            </Task>
            <Task label="MetaTrader 4" open active>
                <svg width="24" height="24" viewBox="0 0 24 24"><path d="M7 1h10v8H7zM12 6h11v14H12z" fill="#e6f2ff" stroke="#3f87cc" /><path d="M14 15l2-4 2 5 2-5" stroke="#3f87cc" fill="none" /><circle cx="7" cy="10" r="4" fill="#f3c98d" stroke="#ad6f1c" /><path d="M1 22c0-5 2-7 6-7s6 2 6 7z" fill="#35a13c" /><path d="M6 15h3l-1.500 6z" fill="#fff" /><path d="M10 19h11v3H10z" fill="#4d96dc" /></svg>
            </Task>
            <Task label="GC" open>
                <svg width="24" height="24" viewBox="0 0 24 24" fill="none"><circle cx="12" cy="12" r="11" fill="#151b3d" /><path d="M14 5a7 7 0 103 11v-4h-4" stroke="#d8a567" strokeWidth="1.800" /><path d="M12 9l4 3 4-3M9 12l3 3" stroke="#e8eaf5" /></svg>
            </Task>
            <Task label="Chrome" open>
                <svg width="23" height="23" viewBox="0 0 24 24"><circle cx="12" cy="12" r="12" fill="#fbc116" /><path d="M12 12L1.600 6A12 12 0 0122.400 6z" fill="#e33b2e" /><path d="M12 12l5.200 3L12 24A12 12 0 011.600 6z" fill="#2da94f" /><path d="M12 6h10.400A12 12 0 0112 24l5.200-9z" fill="#fbc116" /><circle cx="12" cy="12" r="5.800" fill="#fff" /><circle cx="12" cy="12" r="4.500" fill="#4285f4" /></svg>
            </Task>
            <Task label="Яндекс" open>
                <svg width="23" height="23" viewBox="0 0 23 23"><circle cx="11.500" cy="11.500" r="11.200" fill="#f2f2f2" /><path d="M6 5.500l5.500 7 5.500-7M11.500 12v7.500" fill="none" stroke="#e01b1b" strokeWidth="2.600" /></svg>
            </Task>
            <div className="ml-auto flex h-full items-center">
                <button aria-label="Люди" className="flex w-10 justify-center">
                    <svg width="16" height="16" viewBox="0 0 16 16" fill="none" stroke="#fff" strokeWidth="1.200"><circle cx="11" cy="4" r="2.800" /><path d="M7.500 10c1-3.500 7-3.500 7.500 1" /><circle cx="5" cy="8.500" r="2.500" /><path d="M1 15.500c.5-5 7.500-5 8 0" /></svg>
                </button>
                <button aria-label="Скрытые значки" className="flex w-[30px] justify-center">
                    <svg width="12" height="7" fill="none"><path d="M1 6l5-5 5 5" stroke="#fff" strokeWidth="1.300" /></svg>
                </button>
                <button aria-label="Сеть" className="flex w-[22px] justify-center">
                    <svg width="13" height="13" viewBox="0 0 13 13" fill="none" stroke="#fff" strokeWidth="1.300"><path d="M1 13C1 6 6 1 13 1M4 13c0-5 4-9 9-9M7 13c0-3 3-6 6-6" /><circle cx="11.500" cy="11.500" r="1" fill="#fff" /></svg>
                </button>
                <button aria-label="Звук" className="flex w-[22px] justify-center">
                    <svg width="17" height="14" viewBox="0 0 17 14" fill="none" stroke="#fff" strokeWidth="1.200"><path d="M1 5h2.500L7 1.500v11L3.500 9H1zM9 5q1.500 2 0 4M11.300 3.500q3 3.500 0 7" /><path d="M13.500 2q4 5 0 10" stroke="#888" /></svg>
                </button>
                <button className="w-[38px] text-[12px] leading-4">РУС</button>
                <time className="w-[66px] text-center text-[11px] leading-[18px]">12:04<br />28.03.2019</time>
                <button aria-label="Уведомления" className="flex w-10 justify-center">
                    <svg width="17" height="16" viewBox="0 0 17 16" fill="none" stroke="#fff" strokeWidth="1.300"><path d="M1 1h15v11h-5l-2.500 3L6 12H1z" /></svg>
                </button>
                <span className="ml-2 h-full w-[5px] border-l border-[#666]" />
            </div>
        </nav>
    );
}

const MdiButton = ({ label, d }: { label: string; d: string }) => (
    <button aria-label={label} className="flex h-[18px] w-[18px] items-center justify-center border border-[#e2e2e2] bg-white">
        <svg width="8" height="8" fill="none" aria-hidden="true"><path d={d} stroke="#71859b" strokeWidth="1.400" /></svg>
    </button>
);

export default function App() {
    return (
        <div className="flex h-screen flex-col overflow-hidden bg-[#1c2024] font-['Open_Sans','Noto_Sans',sans-serif] text-black">
            <div className="flex min-h-0 flex-1">
                <div className="w-[7px] shrink-0 bg-[linear-gradient(#b9781a_0%,#c98512_8%,#a86a14_15%,#1c2634_19%,#16202e_26%,#7a5013_32%,#b87a14_38%,#c58a1c_47%,#8f94a5_52%,#8fa8cf_56%,#5a86bb_64%,#3b6ea6_78%,#5b6f88_86%,#3b3026_90%,#8f6d4d_95%,#4b6f9c_100%)]" />
                <div className="flex min-w-0 flex-1 flex-col border-t border-l border-[#78b4f4] bg-[#f0f0f0]">
                    <header className="flex h-[30px] shrink-0 items-center bg-white pl-[9px]">
                        <AppIcon />
                        <h1 className="pl-1 text-[11px] leading-4">3679485: InstaForex-Cent2.com - [GOLD,M5]</h1>
                        <div className="ml-auto flex items-center gap-[35px] pr-[10px]">
                            <button aria-label="Свернуть"><svg width="10" height="10" aria-hidden="true"><path d="M0 5.500h10" stroke="#000" /></svg></button>
                            <button aria-label="Развернуть"><svg width="10" height="10" fill="none" aria-hidden="true"><path d="M.5.500h9v9h-9z" stroke="#000" /></svg></button>
                            <button aria-label="Закрыть"><svg width="10" height="10" aria-hidden="true"><path d="M0 0l10 10M10 0L0 10" stroke="#000" /></svg></button>
                        </div>
                    </header>
                    <div className="flex h-5 shrink-0 items-center overflow-hidden pl-[5px]">
                        <AppIcon />
                        <menu className="flex gap-[19px] pl-2 text-[11px] leading-4">
                            {['Файл', 'Вид', 'Вставка', 'Графики', 'Сервис', 'Окно', 'Справка'].map(item => (
                                <li key={item}><button>{item}</button></li>
                            ))}
                        </menu>
                        <div className="-mr-2 ml-auto flex gap-px">
                            <MdiButton label="Свернуть окно" d="M1 7h5" />
                            <MdiButton label="Восстановить окно" d="M2.500 3V1H7v4H5.500M1 3.500h4v3H1z" />
                            <MdiButton label="Закрыть окно" d="M1 1l5 5M6 1L1 6" />
                        </div>
                    </div>
                    <Toolbars />
                    <div className="flex min-h-0 flex-1">
                        <aside className="flex w-[225px] shrink-0 flex-col gap-[2px] border-t border-[#a0a0a0] pr-[2px] pb-[3px] pl-[3px]">
                            <MarketWatch />
                            <Navigator />
                        </aside>
                        <main className="flex min-w-0 flex-1 flex-col border-t-2 border-l-2 border-[#8a8a8a]">
                            <Chart />
                            <ChartTabs />
                        </main>
                    </div>
                    <Terminal />
                    <StatusBar />
                </div>
            </div>
            <Taskbar />
        </div>
    );
}
